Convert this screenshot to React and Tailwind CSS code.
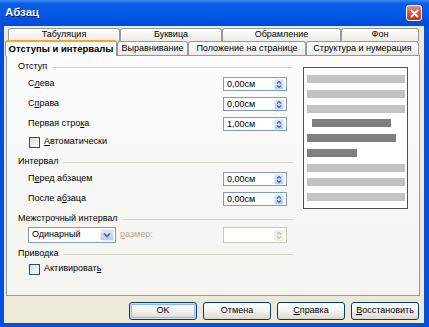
import React from "react";

function U({ children }) {
  return <span className="underline underline-offset-[1px]">{children}</span>;
}

function SpinBtn({ disabled }) {
  const c = disabled ? "#C4C2B8" : "#4D6185";
  return (
    <div
      className={`flex h-[11px] w-[10px] items-center justify-center rounded-[2px] border ${
        disabled
          ? "border-[#EDEDE8] bg-[#F1F0EA]"
          : "border-[#E6EEFD] bg-gradient-to-b from-[#DCE6FC] to-[#B6CBF6]"
      }`}
    >
      <svg width="6" height="9" viewBox="0 0 6 9">
        <path d="M1 3.5 L3 1.5 L5 3.5" fill="none" stroke={c} strokeWidth="1.2" />
        <path d="M1 5.5 L3 7.5 L5 5.5" fill="none" stroke={c} strokeWidth="1.2" />
      </svg>
    </div>
  );
}

function Spin({ value, disabled, tall }) {
  return (
    <div
      className={`flex w-[64px] items-center border bg-white pl-[3px] pr-[2px] ${
        tall ? "h-[16px]" : "h-[14px]"
      } ${disabled ? "border-[#C9C7BA]" : "border-[#7F9DB9]"}`}
    >
      <span className="flex-1 leading-none">{value}</span>
      <SpinBtn disabled={disabled} />
    </div>
  );
}

function Section({ title, className = "" }) {
  return (
    <div className={`flex h-[14px] items-center gap-[5px] ${className}`}>
      <span>{title}</span>
      <div className="h-px flex-1 bg-[#D5D3C6]" />
    </div>
  );
}

function Row({ label, value }) {
  return (
    <div className="flex h-[20px] items-center justify-between pl-[10px] pr-[6px]">
      <span>{label}</span>
      <Spin value={value} />
    </div>
  );
}

function Check({ label }) {
  return (
    <div className="flex h-[16px] items-center gap-[4px] pl-[11px]">
      <div className="h-[11px] w-[11px] border border-[#1C5180] bg-gradient-to-br from-[#DCDBD5] to-white" />
      <span>{label}</span>
    </div>
  );
}

function Tab({ w, children, active }) {
  if (active) {
    return (
      <div
        className={`relative z-10 -mb-[1px] -mt-[1px] flex h-[16px] items-center justify-center rounded-t-[3px] border-x border-t-[2px] border-x-[#919B9C] border-t-[#F5A623] bg-[#FCFCFE] text-[9.5px] font-bold ${w}`}
      >
        {children}
      </div>
    );
  }
  return (
    <div
      className={`flex items-center justify-center rounded-t-[3px] border-x border-t border-[#919B9C] bg-gradient-to-b from-white to-[#ECEBE6] ${w}`}
    >
      {children}
    </div>
  );
}

function Btn({ children, def }) {
  return (
    <div
      className={`flex h-[18px] w-[68px] items-center justify-center rounded-[3px] border border-[#003C74] bg-gradient-to-b from-white via-[#F3F2EE] to-[#DCD8CE] ${
        def ? "shadow-[inset_0_0_0_1px_#CEE7FF,inset_0_0_0_2px_#98B4EE]" : ""
      }`}
    >
      {children}
    </div>
  );
}

const bars = [
  { l: "ml-[3px] w-[98px]", c: "bg-[#C3C3C3]" },
  { l: "ml-[3px] w-[98px]", c: "bg-[#C3C3C3]" },
  { l: "ml-[3px] w-[98px]", c: "bg-[#C3C3C3]" },
  { l: "ml-[8px] w-[79px]", c: "bg-[#7F7F7F]" },
  { l: "ml-[3px] w-[89px]", c: "bg-[#7F7F7F]" },
  { l: "ml-[3px] w-[50px]", c: "bg-[#7F7F7F]" },
  { l: "ml-[3px] w-[98px]", c: "bg-[#C3C3C3]" },
  { l: "ml-[3px] w-[98px]", c: "bg-[#C3C3C3]" },
  { l: "ml-[3px] w-[98px]", c: "bg-[#C3C3C3]" },
];

export default function App() {
  return (
    <div className="flex h-[327px] w-[429px] flex-col overflow-hidden bg-[#0450DC] font-['Liberation_Sans',Arial,sans-serif] text-[9px] text-black">
      {/* Title bar */}
      <div className="flex h-[26px] items-center justify-between bg-[linear-gradient(to_bottom,#3A8DF6_0%,#0B5DE4_14%,#0458E6_60%,#0249D8_100%)] pl-[5px] pr-[7px]">
        <span className="text-[11.5px] font-bold text-white [text-shadow:1px_1px_0_#0A1E6E]">Абзац</span>
        <div className="flex h-[16px] w-[16px] items-center justify-center rounded-[3px] border border-white bg-gradient-to-b from-[#EE8E76] via-[#D9553A] to-[#C2381C]">
          <svg width="9" height="9" viewBox="0 0 9 9">
            <path d="M1.5 1.5 L7.5 7.5 M7.5 1.5 L1.5 7.5" stroke="white" strokeWidth="1.8" strokeLinecap="round" />
          </svg>
        </div>
      </div>

      {/* Body */}
      <div className="mb-[4px] ml-[4px] mr-[5px] flex flex-1 flex-col bg-[#ECE9D8] pl-[2px] pr-[4px] pt-[2px]">
        {/* Tabs row 1 */}
        <div className="ml-[2px] flex h-[13px]">
          <Tab w="w-[112px]">Табуляция</Tab>
          <Tab w="w-[102px]">Буквица</Tab>
          <Tab w="w-[119px]">Обрамление</Tab>
          <Tab w="w-[78px]">Фон</Tab>
        </div>
        {/* Tabs row 2 */}
        <div className="-ml-[1px] flex h-[14px] items-end">
          <Tab w="w-[112px]" active>Отступы и интервалы</Tab>
          <div className="flex h-[14px]">
            <Tab w="w-[71px]">Выравнивание</Tab>
            <Tab w="w-[118px]">Положение на странице</Tab>
            <Tab w="w-[113px]">Структура и нумерация</Tab>
          </div>
        </div>

        {/* Panel */}
        <div className="flex h-[241px] border border-[#919B9C] bg-gradient-to-b from-[#FCFCFE] to-[#F4F3EE] pl-[11px] pt-[4px]">
          <div className="flex w-[275px] flex-col">
            <Section title="Отступ" />
            <Row label={<>С<U>л</U>ева</>} value="0,00см" />
            <Row label={<>С<U>п</U>рава</>} value="0,00см" />
            <Row label={<>Первая стро<U>к</U>а</>} value="1,00см" />
            <Check label={<><U>А</U>втоматически</>} />
            <Section title="Интервал" className="mt-[5px]" />
            <Row label={<>П<U>е</U>ред абзацем</>} value="0,00см" />
            <Row label={<>После а<U>б</U>заца</>} value="0,00см" />
            <Section title="Межстрочный интервал" className="mt-[3px]" />
            <div className="flex h-[18px] items-center pl-[10px] pr-[6px]">
              <div className="flex h-[16px] w-[88px] items-center border border-[#7F9DB9] bg-white pl-[3px] pr-[1px]">
                <span className="flex-1">Одинарный</span>
                <div className="flex h-[12px] w-[14px] items-center justify-center rounded-[2px] border border-[#E6EEFD] bg-gradient-to-b from-[#DCE6FC] to-[#B6CBF6]">
                  <svg width="8" height="6" viewBox="0 0 8 6">
                    <path d="M1 1.5 L4 4.5 L7 1.5" fill="none" stroke="#4D6185" strokeWidth="1.6" />
                  </svg>
                </div>
              </div>
              <span className="ml-[4px] flex-1 text-[#ACA899]"><U>р</U>азмер:</span>
              <Spin value="" disabled tall />
            </div>
            <Section title="Приводка" className="mt-[3px]" />
            <Check label={<>Активироват<U>ь</U></>} />
          </div>

          {/* Preview */}
          <div className="ml-[10px] mt-[7px] flex h-[142px] w-[105px] flex-col gap-[6.75px] border border-[#505050] bg-white pt-[7px]">
            {bars.map((b, i) => (
              <div key={i} className={`h-[8px] ${b.l} ${b.c}`} />
            ))}
          </div>
        </div>

        {/* Buttons */}
        <div className="mt-[6px] flex justify-end gap-[6px] pr-[1px]">
          <Btn def>OK</Btn>
          <Btn>Отмена</Btn>
          <Btn><U>С</U>правка</Btn>
          <Btn><U>В</U>осстановить</Btn>
        </div>
      </div>
    </div>
  );
}
